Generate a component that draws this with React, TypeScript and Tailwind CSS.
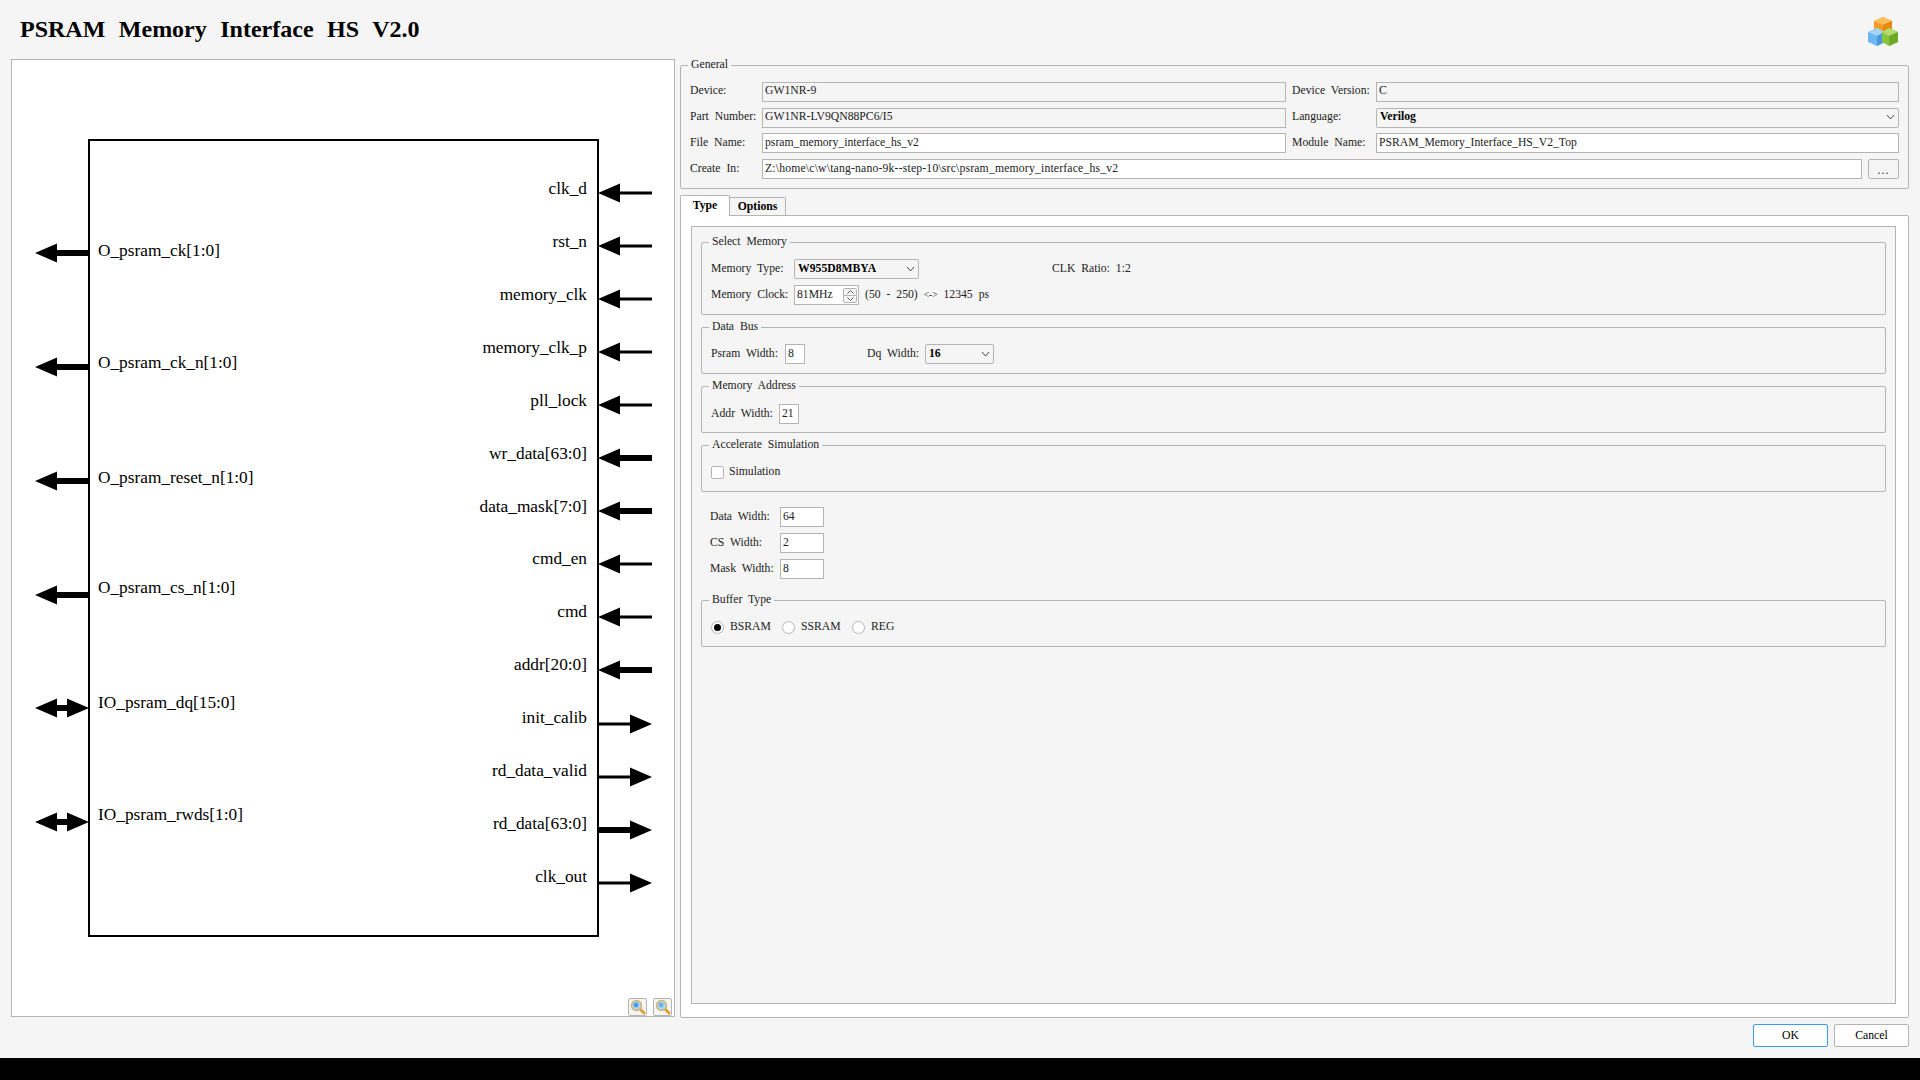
import type { ReactNode } from "react";

const leftPorts = [
  { name: "O_psram_ck[1:0]", y: 253, ty: 251, kind: "out" },
  { name: "O_psram_ck_n[1:0]", y: 367, ty: 363, kind: "out" },
  { name: "O_psram_reset_n[1:0]", y: 481, ty: 478, kind: "out" },
  { name: "O_psram_cs_n[1:0]", y: 595, ty: 588, kind: "out" },
  { name: "IO_psram_dq[15:0]", y: 708, ty: 703, kind: "bi" },
  { name: "IO_psram_rwds[1:0]", y: 822, ty: 815, kind: "bi" },
];

const rightPorts = [
  { name: "clk_d", dir: "in", bus: false },
  { name: "rst_n", dir: "in", bus: false },
  { name: "memory_clk", dir: "in", bus: false },
  { name: "memory_clk_p", dir: "in", bus: false },
  { name: "pll_lock", dir: "in", bus: false },
  { name: "wr_data[63:0]", dir: "in", bus: true },
  { name: "data_mask[7:0]", dir: "in", bus: true },
  { name: "cmd_en", dir: "in", bus: false },
  { name: "cmd", dir: "in", bus: false },
  { name: "addr[20:0]", dir: "in", bus: true },
  { name: "init_calib", dir: "out", bus: false },
  { name: "rd_data_valid", dir: "out", bus: false },
  { name: "rd_data[63:0]", dir: "out", bus: true },
  { name: "clk_out", dir: "out", bus: false },
];

function LeftArrow({ kind }: { kind: string }) {
  return (
    <svg width="54" height="20" viewBox="0 0 54 20">
      {kind === "out" ? (
        <path d="M0 10 L22 0.5 V7 H54 V13 H22 V19.5 Z" fill="#000" />
      ) : (
        <path d="M0 10 L22 0.5 V7 H32 V0.5 L54 10 L32 19.5 V13 H22 V19.5 Z" fill="#000" />
      )}
    </svg>
  );
}

function RightArrow({ dir, bus }: { dir: string; bus: boolean }) {
  const h = bus ? 3 : 1.5;
  return (
    <svg width="54" height="20" viewBox="0 0 54 20">
      {dir === "in" ? (
        <path d={`M0 10 L22 0.5 V${10 - h} H54 V${10 + h} H22 V19.5 Z`} fill="#000" />
      ) : (
        <path d={`M54 10 L32 0.5 V${10 - h} H0 V${10 + h} H32 V19.5 Z`} fill="#000" />
      )}
    </svg>
  );
}

function Magnifier({ plus }: { plus?: boolean }) {
  return (
    <button className="flex h-[18px] w-[19px] items-center justify-center rounded-[2px] border border-[#b4b4b4] bg-[#f5f5f5]">
      <svg width="16" height="16" viewBox="0 0 16 16">
        <path d="M9.5 9.5 L14 14" stroke="#e09a2b" strokeWidth="2.6" strokeLinecap="round" />
        <circle cx="6.5" cy="6.5" r="5" fill="#a9d6f2" stroke="#d9b26a" strokeWidth="1.4" />
        <circle cx="6" cy="6" r="2.4" fill={plus ? "#4a9ae0" : "#6cb2e8"} />
      </svg>
    </button>
  );
}

function Cubes() {
  return (
    <svg width="30" height="29" viewBox="0 0 30 29">
      <path d="M15 0 L24 4 V14 L15 18 L6 14 V4 Z" fill="#f59a23" />
      <path d="M15 0 L24 4 L15 8 L6 4 Z" fill="#fbbf5d" />
      <path d="M15 8 V18 L24 14 V4 Z" fill="#e8860f" />
      <path d="M9 11 L17 15 V25 L9 29 L0 25 V15 Z" fill="#6db6f0" />
      <path d="M9 11 L17 15 L9 19 L0 15 Z" fill="#a5d4f8" />
      <path d="M9 19 V29 L17 25 V15 Z" fill="#4a97dc" />
      <path d="M21 11 L30 15 V25 L21 29 L14 25 V15 Z" fill="#8cc63f" />
      <path d="M21 11 L30 15 L21 19 L14 15 Z" fill="#b3dc6c" />
      <path d="M21 19 V29 L30 25 V15 Z" fill="#6fa82c" />
    </svg>
  );
}

function Chevron() {
  return (
    <svg width="9" height="6" viewBox="0 0 9 6" className="shrink-0">
      <path d="M1 1 L4.5 5 L8 1" fill="none" stroke="#444" strokeWidth="1" />
    </svg>
  );
}

function Field({ children, white, className }: { children?: ReactNode; white?: boolean; className?: string }) {
  return (
    <div
      className={`flex h-5 items-center border border-[#b4b4b4] px-[2px] ${white ? "bg-white" : "bg-[#f5f5f5]"} ${className ?? ""}`}
    >
      {children}
    </div>
  );
}

function Select({ children, className }: { children: ReactNode; className?: string }) {
  return (
    <div
      className={`flex h-5 items-center justify-between rounded-[2px] border border-[#b4b4b4] bg-[#f5f5f5] pl-[3px] pr-[3px] font-bold text-black ${className ?? ""}`}
    >
      <span>{children}</span>
      <Chevron />
    </div>
  );
}

function Group({ title, className, children }: { title: string; className: string; children: ReactNode }) {
  return (
    <fieldset className={`rounded-[2px] border border-[#b4b4b4] ${className}`}>
      <legend className="ml-[7px] px-[3px] leading-[14px]">{title}</legend>
      {children}
    </fieldset>
  );
}

export default function App() {
  return (
    <div className="h-screen w-full overflow-hidden bg-black font-['Liberation_Serif',serif] text-[11.7px] text-[#222] [word-spacing:3px]">
      <div className="h-[1058px] bg-[#f5f5f5]">
        <header className="flex h-[58px] items-start justify-between pl-[20px] pr-[22px]">
          <h1 className="mt-[12px] text-[24px] font-bold leading-[34px] text-black [word-spacing:7.5px]">
            PSRAM Memory Interface HS V2.0
          </h1>
          <div className="mt-[17px]">
            <Cubes />
          </div>
        </header>

        <div className="flex items-start">
          {/* Symbol panel */}
          <div className="relative ml-[11px] mt-px h-[958px] w-[664px] border border-[#b4b4b4] bg-white [word-spacing:0px]">
            <div className="absolute left-[76px] top-[79px] h-[798px] w-[511px] border-2 border-black" />
            {leftPorts.map((p) => (
              <div key={p.name}>
                <div className="absolute left-[23px]" style={{ top: p.y - 70 }}>
                  <LeftArrow kind={p.kind} />
                </div>
                <span
                  className="absolute left-[86px] whitespace-nowrap text-[17.3px] leading-5 text-black"
                  style={{ top: p.ty - 70 }}
                >
                  {p.name}
                </span>
              </div>
            ))}
            {rightPorts.map((p, i) => {
              const y = 193 + i * 53.05;
              return (
                <div key={p.name}>
                  <div className="absolute left-[586px]" style={{ top: y - 70 }}>
                    <RightArrow dir={p.dir} bus={p.bus} />
                  </div>
                  <span
                    className="absolute right-[87px] whitespace-nowrap text-[17.3px] leading-5 text-black"
                    style={{ top: y - (i < 7 ? 74 : 75.5) }}
                  >
                    {p.name}
                  </span>
                </div>
              );
            })}
            <div className="absolute bottom-0 right-[2px] flex gap-[6px]">
              <Magnifier plus />
              <Magnifier />
            </div>
          </div>

          {/* Settings */}
          <div className="ml-[5px] w-[1229px]">
            <Group title="General" className="h-[131px]">
              <div className="grid grid-cols-[72px_524px_90px_523px] items-center gap-y-[5.6px] pl-[9px] pt-[10px]">
                <span className="pb-[2px]">Device:</span>
                <Field className="pb-[2px]">GW1NR-9</Field>
                <span className="pb-[2px] pl-[6px]">Device Version:</span>
                <Field className="pb-[2px]">C</Field>
                <span className="pb-[2px]">Part Number:</span>
                <Field className="pb-[2px]">GW1NR-LV9QN88PC6/I5</Field>
                <span className="pb-[2px] pl-[6px]">Language:</span>
                <Select className="pb-[2px]">Verilog</Select>
                <span>File Name:</span>
                <Field white>psram_memory_interface_hs_v2</Field>
                <span className="pl-[6px]">Module Name:</span>
                <Field white>PSRAM_Memory_Interface_HS_V2_Top</Field>
                <span>Create In:</span>
                <div className="col-span-3 flex gap-[6px]">
                  <Field white className="flex-1 tracking-[0.18px]">
                    Z:\home\c\w\tang-nano-9k--step-10\src\psram_memory_interface_hs_v2
                  </Field>
                  <button className="h-5 w-[31px] rounded-[2px] border border-[#b4b4b4] bg-[#f5f5f5] pt-1 leading-none tracking-[1px]">
                    ...
                  </button>
                </div>
              </div>
            </Group>

            <div className="mt-[6px] flex items-end">
              <div className="z-10 -mb-px flex h-[21px] w-[50px] items-center justify-center rounded-t-[2px] border border-b-0 border-[#b4b4b4] bg-white font-bold text-black">
                Type
              </div>
              <div className="flex h-[18px] w-[56px] items-center justify-center rounded-tr-[2px] border border-b-0 border-l-0 border-[#b4b4b4] font-bold text-black">
                Options
              </div>
            </div>

            <div className="h-[803px] rounded-b-[2px] rounded-tr-[2px] border border-[#b4b4b4] bg-white pl-[10px] pr-[12px] pt-[10px]">
              <div className="h-[778px] border border-[#b4b4b4] bg-[#f5f5f5] px-[9px] pt-[8px]">
                <Group title="Select Memory" className="h-[80px]">
                  <div className="flex flex-col gap-[6px] pl-[9px] pt-[10px]">
                    <div className="flex items-center">
                      <span className="w-[83px]">Memory Type:</span>
                      <Select className="w-[125px]">W955D8MBYA</Select>
                      <span className="ml-[133px]">CLK Ratio: 1:2</span>
                    </div>
                    <div className="flex items-center">
                      <span className="w-[83px]">Memory Clock:</span>
                      <div className="flex h-5 w-[65px] items-center justify-between border border-[#b4b4b4] bg-white pl-[2px] pr-[1px]">
                        <span>81MHz</span>
                        <div className="flex h-[15px] w-[14px] flex-col overflow-hidden rounded-[2px] border border-[#b4b4b4] bg-[#f5f5f5]">
                          <div className="flex flex-1 items-center justify-center border-b border-[#b4b4b4]">
                            <svg width="7" height="4" viewBox="0 0 7 4">
                              <path d="M0.5 3.5 L3.5 0.5 L6.5 3.5" fill="none" stroke="#555" />
                            </svg>
                          </div>
                          <div className="flex flex-1 items-center justify-center">
                            <svg width="7" height="4" viewBox="0 0 7 4">
                              <path d="M0.5 0.5 L3.5 3.5 L6.5 0.5" fill="none" stroke="#555" />
                            </svg>
                          </div>
                        </div>
                      </div>
                      <span className="ml-[6px]">
                        (50 - 250) <span className="text-[9.5px]">{"<->"}</span> 12345 ps
                      </span>
                    </div>
                  </div>
                </Group>

                <Group title="Data Bus" className="mt-[5px] h-[54px]">
                  <div className="flex items-center pl-[9px] pt-[10px]">
                    <span className="w-[74px]">Psram Width:</span>
                    <Field white className="w-5">8</Field>
                    <span className="ml-[62px] w-[58px]">Dq Width:</span>
                    <Select className="w-[69px]">16</Select>
                  </div>
                </Group>

                <Group title="Memory Address" className="mt-[5px] h-[54px]">
                  <div className="flex items-center pl-[9px] pt-[11px]">
                    <span className="w-[68px]">Addr Width:</span>
                    <Field white className="w-5">21</Field>
                  </div>
                </Group>

                <Group title="Accelerate Simulation" className="mt-[5px] h-[54px]">
                  <div className="flex items-center pl-[9px] pt-[11px]">
                    <span className="h-[13px] w-[13px] rounded-[2px] border border-[#b4b4b4] bg-white" />
                    <span className="ml-[5px] pb-[2px]">Simulation</span>
                  </div>
                </Group>

                <div className="mt-[15px] flex flex-col gap-[6px] pl-[9px]">
                  {[
                    ["Data Width:", "64"],
                    ["CS Width:", "2"],
                    ["Mask Width:", "8"],
                  ].map(([label, value]) => (
                    <div key={label} className="flex items-center">
                      <span className="w-[70px]">{label}</span>
                      <Field white className="w-[44px]">{value}</Field>
                    </div>
                  ))}
                </div>

                <Group title="Buffer Type" className="mt-[14px] h-[54px]">
                  <div className="flex items-center pl-[9px] pt-[11px]">
                    <span className="flex h-[13px] w-[13px] items-center justify-center rounded-full border border-[#b4b4b4] bg-white">
                      <span className="h-[7px] w-[7px] rounded-full bg-black" />
                    </span>
                    <span className="ml-[6px] w-[52px] pb-[2px]">BSRAM</span>
                    <span className="h-[13px] w-[13px] rounded-full border border-[#b4b4b4] bg-white" />
                    <span className="ml-[6px] w-[51px] pb-[2px]">SSRAM</span>
                    <span className="h-[13px] w-[13px] rounded-full border border-[#b4b4b4] bg-white" />
                    <span className="ml-[6px] pb-[2px]">REG</span>
                  </div>
                </Group>
              </div>
            </div>

            <div className="mt-[6px] flex justify-end gap-[6px]">
              <button className="h-[23px] w-[75px] rounded-[2px] border border-[#3b9bf5] bg-white text-black">OK</button>
              <button className="h-[23px] w-[75px] rounded-[2px] border border-[#b4b4b4] bg-white text-black">Cancel</button>
            </div>
          </div>
        </div>
      </div>
    </div>
  );
}
